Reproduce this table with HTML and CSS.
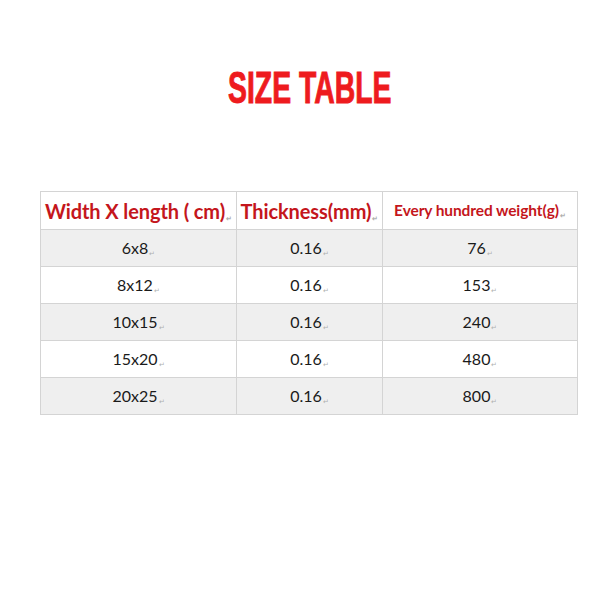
FILE: index.html
```html
<!DOCTYPE html>
<html>
<head>
<meta charset="utf-8">
<link rel="stylesheet" href="styles.css">
</head>
<body>
<div class="page">
  <h1 class="title"><span class="title-text">SIZE TABLE</span></h1>
  <table class="size-table">
    <colgroup>
      <col class="c1"><col class="c2"><col class="c3">
    </colgroup>
    <tr class="head">
      <th class="h-big">Width X length ( cm)<span class="ret">↵</span></th>
      <th class="h-big">Thickness(mm)<span class="ret">↵</span></th>
      <th class="h-small">Every hundred weight(g)<span class="ret">↵</span></th>
    </tr>
    <tr class="grey"><td>6x8<span class="ret">↵</span></td><td>0.16<span class="ret">↵</span></td><td>76<span class="ret">↵</span></td></tr>
    <tr><td>8x12<span class="ret">↵</span></td><td>0.16<span class="ret">↵</span></td><td>153<span class="ret">↵</span></td></tr>
    <tr class="grey"><td>10x15<span class="ret">↵</span></td><td>0.16<span class="ret">↵</span></td><td>240<span class="ret">↵</span></td></tr>
    <tr><td>15x20<span class="ret">↵</span></td><td>0.16<span class="ret">↵</span></td><td>480<span class="ret">↵</span></td></tr>
    <tr class="grey"><td>20x25<span class="ret">↵</span></td><td>0.16<span class="ret">↵</span></td><td>800<span class="ret">↵</span></td></tr>
  </table>
</div>
</body>
</html>
```
FILE: styles.css
```css
html, body {
  margin: 0;
  padding: 0;
  background: #ffffff;
}
.page {
  width: 600px;
  height: 600px;
  padding-top: 63px;
  box-sizing: border-box;
}
.title {
  margin: 0;
  padding-left: 19px;
  height: 50px;
  text-align: center;
  font-family: "Liberation Sans", Arial, sans-serif;
  font-weight: bold;
  font-size: 44px;
  line-height: 50px;
  color: #ee1b1e;
}
.title-text {
  display: inline-block;
  transform: scaleX(0.645);
  -webkit-text-stroke: 1px #ee1b1e;
}
.size-table {
  margin: 78px 0 0 40px;
  border-collapse: collapse;
  table-layout: fixed;
  width: 537px;
  font-family: Lato, "Open Sans", sans-serif;
}
.c1 { width: 196px; }
.c2 { width: 146px; }
.c3 { width: 195px; }
.size-table th,
.size-table td {
  border: 1px solid #d4d4d4;
  text-align: center;
  padding: 0;
  white-space: nowrap;
}
.head th {
  height: 37px;
  color: #c4161c;
  font-weight: bold;
}
.h-big { font-size: 20px; letter-spacing: -0.1px; }
.h-small { font-size: 15.5px; letter-spacing: -0.1px; }
.size-table td {
  height: 36px;
  font-size: 16px;
  color: #1a1a1a;
}
.grey td { background: #efefef; }
.ret {
  font-size: 7px;
  color: #b0b0b0;
  vertical-align: -2px;
  margin-left: 1px;
  letter-spacing: 0;
}
```
